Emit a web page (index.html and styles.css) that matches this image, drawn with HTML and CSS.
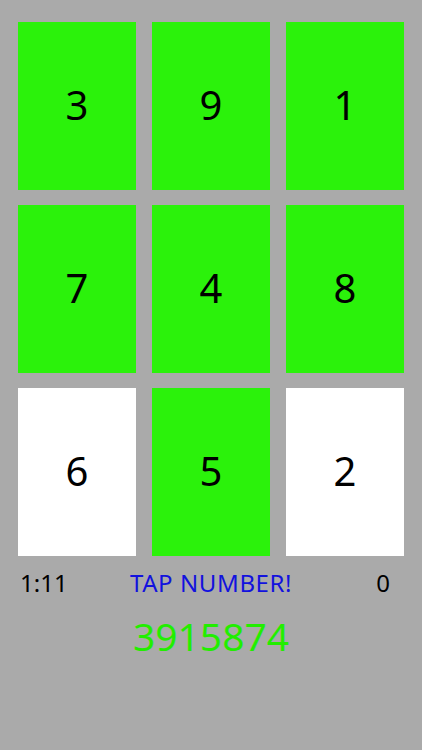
FILE: index.html
```html
<!DOCTYPE html>
<html lang="en">
<head>
    <meta charset="UTF-8">
    <meta name="viewport" content="width=device-width, initial-scale=1.0">
    <title>Tap Number</title>
    <link rel="stylesheet" href="styles.css">
</head>
<body>
    <div class="game">
        <div class="board">
            <div class="tile">3</div>
            <div class="tile">9</div>
            <div class="tile">1</div>
            <div class="tile">7</div>
            <div class="tile">4</div>
            <div class="tile">8</div>
            <div class="tile open">6</div>
            <div class="tile">5</div>
            <div class="tile open">2</div>
        </div>
        <div class="status">
            <div class="timer">1:11</div>
            <div class="message">TAP NUMBER!</div>
            <div class="score">0</div>
        </div>
        <div class="sequence">3915874</div>
    </div>
</body>
</html>
```

FILE: styles.css
```css
body {
    margin: 0;
    background-color: #aaaaaa;
    font-family: "Noto Sans", "Open Sans", sans-serif;
}
.game {
    padding: 22px 18px;
}
.board {
    display: grid;
    grid-template-columns: repeat(3, 118px);
    grid-auto-rows: 168px;
    column-gap: 16px;
    row-gap: 15px;
}
.tile {
    display: flex;
    align-items: center;
    justify-content: center;
    padding-bottom: 4px;
    background-color: #2bf20b;
    color: #000;
    font-size: 40px;
}
.tile.open {
    background-color: #ffffff;
}
.status {
    display: grid;
    grid-template-columns: 1fr auto 1fr;
    margin-top: 12px;
    font-size: 24px;
    line-height: 30px;
}
.timer {
    padding-left: 2px;
    color: #000;
}
.message {
    color: #1212de;
    letter-spacing: 0.6px;
}
.score {
    text-align: right;
    padding-right: 14px;
    color: #000;
}
.sequence {
    margin-top: 14px;
    text-align: center;
    color: #22ee00;
    font-size: 39px;
    line-height: 48px;
}
```
